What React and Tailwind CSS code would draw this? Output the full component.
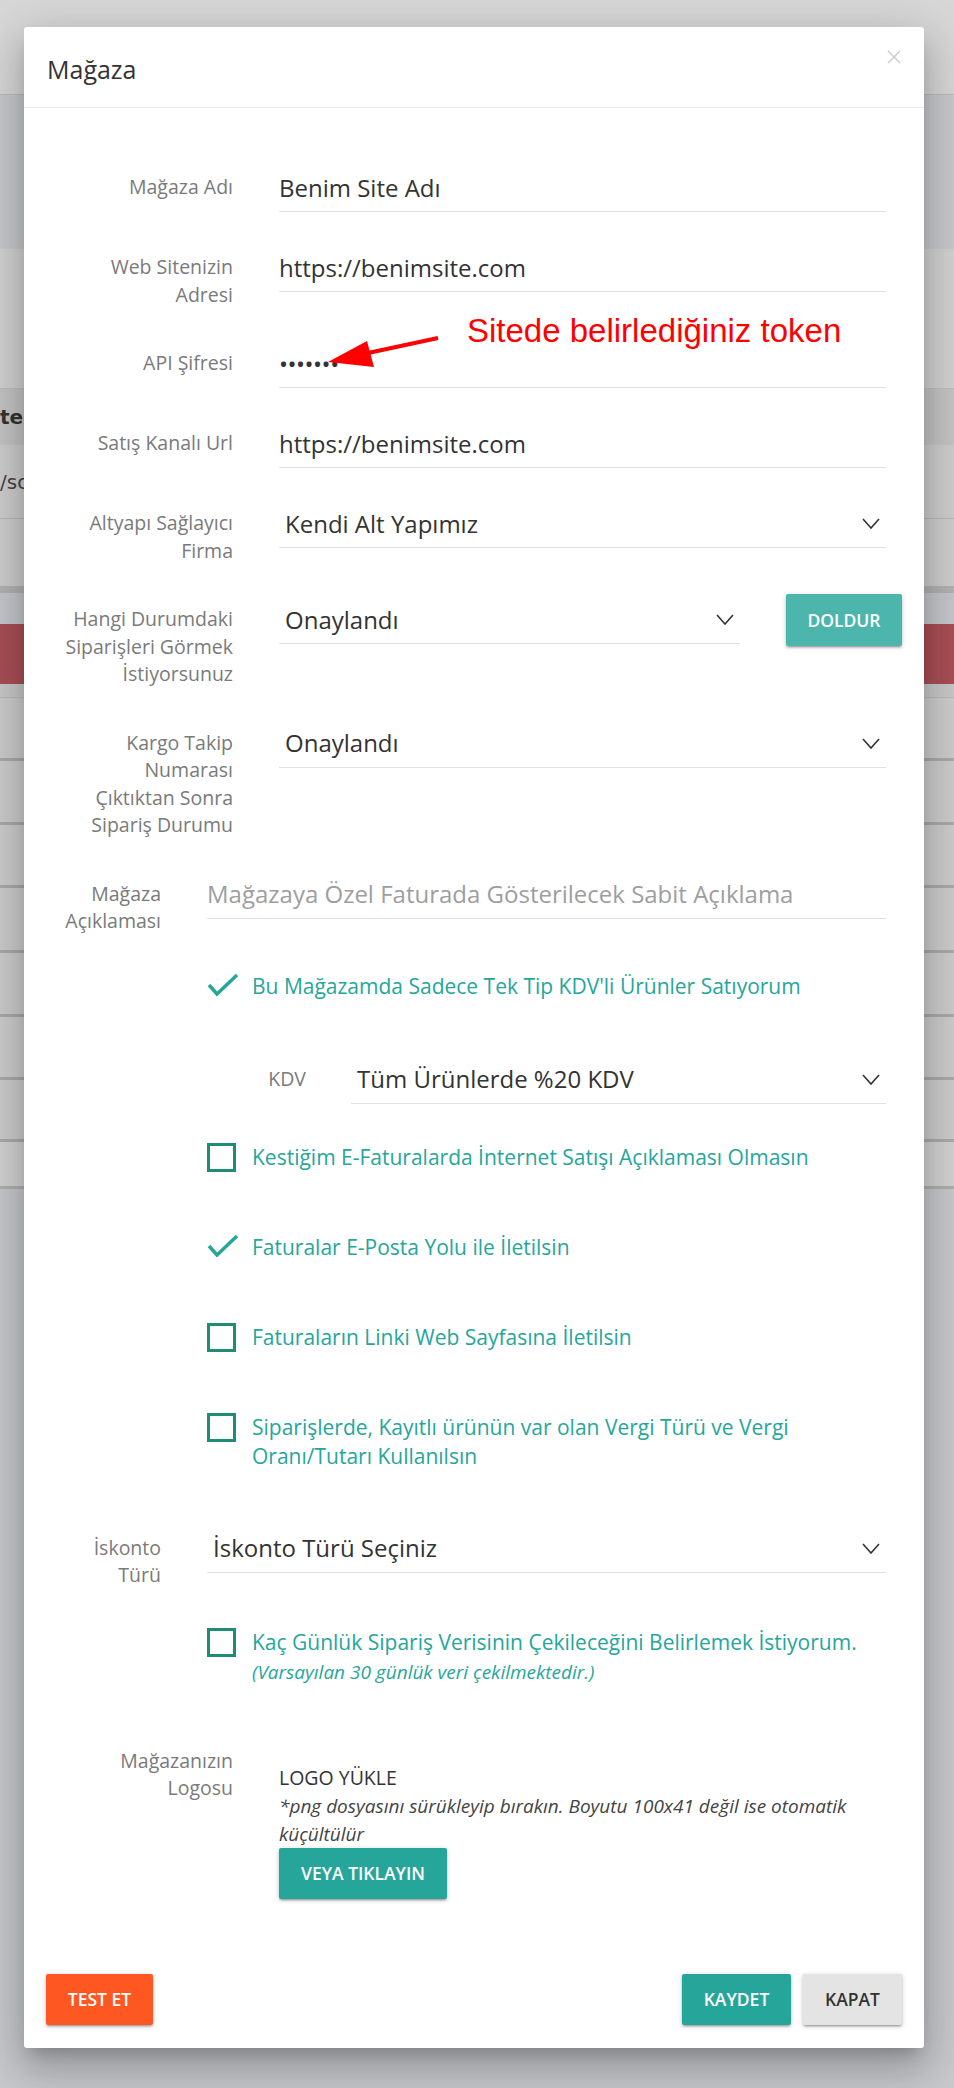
import React from 'react'

function Chevron() {
    return (
        <svg width="18" height="11" viewBox="0 0 18 11" className="shrink-0">
            <polyline points="1,1 9,10 17,1" fill="none" stroke="#333" strokeWidth="1.6" />
        </svg>
    )
}

function TextInput({ value, placeholder }) {
    return (
        <div className="h-12 flex-1 border-b border-[#e0e0e0] flex items-center text-[24px] text-[#333]">
            {value ? value : <span className="text-[#9e9e9e]">{placeholder}</span>}
        </div>
    )
}

function Select({ value, className }) {
    return (
        <div className={"h-12 border-b border-[#e0e0e0] flex items-center justify-between pl-[6px] pr-[6px] text-[24px] text-[#333] " + (className || 'flex-1')}>
            <span>{value}</span>
            <Chevron />
        </div>
    )
}

function Row({ label, children }) {
    return (
        <div className="flex items-start">
            <div className="w-[209px] shrink-0 text-right pt-[9px] text-[19.5px] leading-[27.5px] text-[#7a7a7a]">{label}</div>
            <div className="ml-[46px] flex-1 flex items-start">{children}</div>
        </div>
    )
}

function WideRow({ label, children }) {
    return (
        <div className="flex items-start">
            <div className="w-[137px] shrink-0 text-right pt-[9px] text-[19.5px] leading-[27.5px] text-[#7a7a7a]">{label}</div>
            <div className="ml-[46px] flex-1 flex items-start">{children}</div>
        </div>
    )
}

function Check({ checked, children, note }) {
    return (
        <div className="flex items-start pl-[183px]">
            <div className="w-[45px] shrink-0 flex">
                {checked ?
                    <svg width="32" height="24" viewBox="0 0 32 24" className="mt-[1px]">
                        <polyline points="2,12 10,21 30,2" fill="none" stroke="#26a69a" strokeWidth="3.5" />
                    </svg>
                    :
                    <div className="w-[29px] h-[29px] border-[3px] border-[#1f8c75]"></div>
                }
            </div>
            <div className="flex flex-col">
                <div className="text-[21px] leading-[29px] text-[#26a69a]">{children}</div>
                {note ? <div className="text-[19px] leading-[30px] italic text-[#26a69a]">{note}</div> : ''}
            </div>
        </div>
    )
}

function Backdrop() {
    return (
        <div className="flex flex-col">
            <div className="h-[95px] bg-[#d7d7d7] border-b border-[#bcbcbc]"></div>
            <div className="h-[154px] bg-[#c8c9cd]"></div>
            <div className="h-[140px] bg-[#d2d2d2] border-b border-[#c0c0c0]"></div>
            <div className="h-[56px] bg-[#c4c4c4] flex items-center text-[20px] font-semibold text-[#333] font-['DejaVu_Sans',sans-serif]">te</div>
            <div className="h-[74px] bg-[#cecece] border-b border-[#b9b9b9] flex items-center text-[20px] text-[#444] font-['DejaVu_Sans',sans-serif]">/so</div>
            <div className="h-[74px] bg-[#cecece] border-b-[7px] border-[#b3b3b3]"></div>
            <div className="h-[31px] bg-[#c6c7cc]"></div>
            <div className="h-[60px] bg-[#a94f55]"></div>
            <div className="h-[14px] bg-[#c9c9c9] border-b border-[#bcbcbc]"></div>
            <div className="h-[63px] bg-[#cdcdcd] border-b-[3px] border-[#ababab]"></div>
            <div className="h-[64px] bg-[#cdcdcd] border-b-[3px] border-[#ababab]"></div>
            <div className="h-[63px] bg-[#cdcdcd] border-b-[3px] border-[#ababab]"></div>
            <div className="h-[65px] bg-[#cdcdcd] border-b-[3px] border-[#ababab]"></div>
            <div className="h-[64px] bg-[#cdcdcd] border-b-[3px] border-[#ababab]"></div>
            <div className="h-[63px] bg-[#cdcdcd] border-b-[3px] border-[#ababab]"></div>
            <div className="h-[62px] bg-[#cdcdcd] border-b-[3px] border-[#ababab]"></div>
            <div className="h-[47px] bg-[#d3d3d3] border-b-[3px] border-[#b0b0b0]"></div>
        </div>
    )
}

function App() {
    return (
        <div className="relative min-h-[2088px] w-full overflow-hidden bg-[#c8c9cd] font-['Open_Sans',sans-serif]">
            <Backdrop />

            <div className="absolute left-[24px] top-[27px] w-[900px] rounded-[3px] bg-white shadow-[0_24px_38px_3px_rgba(0,0,0,0.14),0_9px_46px_8px_rgba(0,0,0,0.12),0_11px_15px_-7px_rgba(0,0,0,0.2)]">
                <div className="relative h-[81px] border-b border-[#e8e8e8] px-[23px] pt-[5px] flex items-center">
                    <h4 className="text-[25px] text-[#333]">Mağaza</h4>
                    <svg width="14" height="14" viewBox="0 0 14 14" className="absolute right-[23px] top-[23px]">
                        <path d="M1 1 L13 13 M13 1 L1 13" stroke="#c9c9c9" strokeWidth="1.4" />
                    </svg>
                </div>

                <div className="relative pt-[56px] pr-[38px]">
                    <div className="flex flex-col gap-[32px]">
                        <Row label="Mağaza Adı">
                            <TextInput value="Benim Site Adı" />
                        </Row>
                        <Row label={<>Web Sitenizin<br />Adresi</>}>
                            <TextInput value="https://benimsite.com" />
                        </Row>
                        <Row label="API Şifresi">
                            <TextInput value={<span className="tracking-[-0.5px]">•••••••</span>} />
                        </Row>
                        <Row label="Satış Kanalı Url">
                            <TextInput value="https://benimsite.com" />
                        </Row>
                        <Row label={<>Altyapı Sağlayıcı<br />Firma</>}>
                            <Select value="Kendi Alt Yapımız" />
                        </Row>
                        <Row label={<>Hangi Durumdaki<br />Siparişleri Görmek<br />İstiyorsunuz</>}>
                            <Select value="Onaylandı" className="w-[461px] shrink-0" />
                            <button className="ml-[46px] -mr-[16px] mt-[-2px] h-[52px] w-[116px] shrink-0 rounded-[2px] bg-[#4db6ac] text-white text-[17.5px] font-semibold shadow-[0_2px_2px_rgba(0,0,0,0.14),0_3px_1px_-2px_rgba(0,0,0,0.12),0_1px_5px_rgba(0,0,0,0.2)]">DOLDUR</button>
                        </Row>
                        <Row label={<>Kargo Takip<br />Numarası<br />Çıktıktan Sonra<br />Sipariş Durumu</>}>
                            <Select value="Onaylandı" />
                        </Row>
                        <WideRow label={<>Mağaza<br />Açıklaması</>}>
                            <TextInput placeholder="Mağazaya Özel Faturada Gösterilecek Sabit Açıklama" />
                        </WideRow>
                    </div>

                    <div className="mt-[37px]">
                        <Check checked>Bu Mağazamda Sadece Tek Tip KDV'li Ürünler Satıyorum</Check>
                    </div>

                    <div className="mt-[55px] pl-[183px] flex items-start">
                        <div className="w-[99px] shrink-0 text-right pt-[9px] text-[19.5px] leading-[27.5px] text-[#7a7a7a]">KDV</div>
                        <div className="ml-[45px] flex-1 flex">
                            <Select value="Tüm Ürünlerde %20 KDV" />
                        </div>
                    </div>

                    <div className="mt-[39px] flex flex-col gap-[61px]">
                        <Check>Kestiğim E-Faturalarda İnternet Satışı Açıklaması Olmasın</Check>
                        <Check checked>Faturalar E-Posta Yolu ile İletilsin</Check>
                        <Check>Faturaların Linki Web Sayfasına İletilsin</Check>
                        <Check>Siparişlerde, Kayıtlı ürünün var olan Vergi Türü ve Vergi<br />Oranı/Tutarı Kullanılsın</Check>
                    </div>

                    <div className="mt-[54px]">
                        <WideRow label={<>İskonto<br />Türü</>}>
                            <Select value="İskonto Türü Seçiniz" />
                        </WideRow>
                    </div>

                    <div className="mt-[39px]">
                        <Check note="(Varsayılan 30 günlük veri çekilmektedir.)">Kaç Günlük Sipariş Verisinin Çekileceğini Belirlemek İstiyorum.</Check>
                    </div>

                    <div className="mt-[51px]">
                        <Row label={<>Mağazanızın<br />Logosu</>}>
                            <div className="flex flex-col items-start pt-[26px]">
                                <div className="text-[19.5px] leading-[28px] text-[#333]">LOGO YÜKLE</div>
                                <div className="text-[19px] leading-[28px] italic text-[#444]">*png dosyasını sürükleyip bırakın. Boyutu 100x41 değil ise otomatik<br />küçültülür</div>
                                <button className="h-[51px] px-[22px] rounded-[2px] bg-[#26a69a] text-white text-[17.5px] font-semibold shadow-[0_2px_2px_rgba(0,0,0,0.14),0_3px_1px_-2px_rgba(0,0,0,0.12),0_1px_5px_rgba(0,0,0,0.2)]">VEYA TIKLAYIN</button>
                            </div>
                        </Row>
                    </div>

                    {/* ekran görüntüsü üstündeki not */}
                    <div className="absolute left-[443px] top-[203px] text-[33px] leading-[40px] text-[#ff0000] font-['Liberation_Sans',Arial,sans-serif]">Sitede belirlediğiniz token</div>
                    <svg width="150" height="45" viewBox="0 0 150 45" className="absolute left-[300px] top-[223px]">
                        <line x1="114" y1="7" x2="44" y2="22" stroke="#ff0000" strokeWidth="4" />
                        <polygon points="43,10 4,31 50,36" fill="#ff0000" />
                    </svg>
                </div>

                <div className="mt-[75px] px-[22px] pb-[23px] flex items-center justify-between">
                    <button className="h-[51px] w-[107px] rounded-[2px] bg-[#ff5722] text-white text-[17.5px] font-semibold shadow-[0_2px_2px_rgba(0,0,0,0.14),0_3px_1px_-2px_rgba(0,0,0,0.12),0_1px_5px_rgba(0,0,0,0.2)]">TEST ET</button>
                    <div className="flex gap-[12px]">
                        <button className="h-[51px] w-[109px] rounded-[2px] bg-[#26a69a] text-white text-[17.5px] font-semibold shadow-[0_2px_2px_rgba(0,0,0,0.14),0_3px_1px_-2px_rgba(0,0,0,0.12),0_1px_5px_rgba(0,0,0,0.2)]">KAYDET</button>
                        <button className="h-[51px] w-[99px] rounded-[2px] bg-[#e4e4e4] text-[#333] text-[17.5px] font-semibold shadow-[0_2px_2px_rgba(0,0,0,0.14),0_3px_1px_-2px_rgba(0,0,0,0.12),0_1px_5px_rgba(0,0,0,0.2)]">KAPAT</button>
                    </div>
                </div>
            </div>
        </div>
    )
}

export default App
